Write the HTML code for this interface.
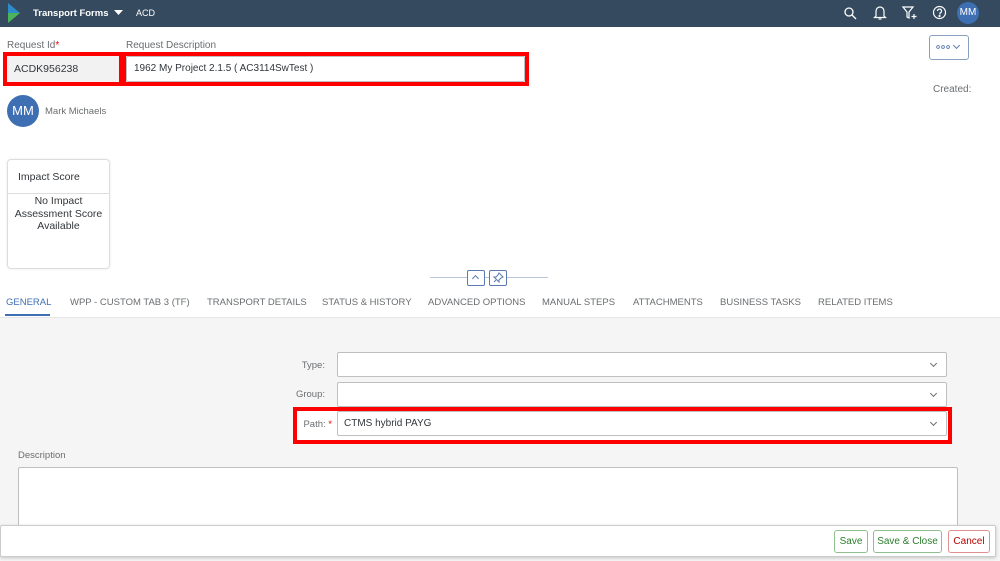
<!DOCTYPE html>
<html><head><meta charset="utf-8"><style>
*{box-sizing:border-box;margin:0;padding:0}
body{width:1000px;height:561px;overflow:hidden;font-family:"Liberation Sans",sans-serif;background:#fff;position:relative;color:#32363a}
.a{position:absolute}
.hdr{left:0;top:0;width:1000px;height:27px;background:#354a5f}
.red{border:4px solid #f00}
.inp{background:#fff;border:1px solid #bfbfbf;border-radius:2px}
.t{font-size:11px;white-space:nowrap}
.tab{top:297px;font-size:9.5px;color:#6a6d70;white-space:nowrap}
.lbl{font-size:9.5px;color:#6a6d70;text-align:right;width:100px}
.chev{position:absolute;right:10px;top:8px;width:5px;height:5px;border-right:1px solid #6a6d70;border-bottom:1px solid #6a6d70;transform:rotate(45deg)}
.btn{top:530px;height:23px;border:1px solid #8fbf8f;border-radius:3px;font-size:10px;color:#2b7d2b;text-align:center;line-height:21px;background:#fff}
</style></head><body>
<div class="a hdr"></div>
<svg class="a" style="left:7px;top:3px" width="14" height="21"><polygon points="1,0 13,10 1,10" fill="#2e8bc9"/><polygon points="1,10 13,10 1,20" fill="#4bb35a"/></svg>
<div class="a t" style="left:33px;top:8px;color:#fff;font-weight:bold;font-size:9.5px">Transport Forms</div>
<svg class="a" style="left:114px;top:10px" width="9" height="6"><polygon points="0,0 9,0 4.5,5" fill="#fff"/></svg>
<div class="a t" style="left:136px;top:8px;color:#fff;font-size:9px">ACD</div>
<svg class="a" style="left:843px;top:6px" width="14" height="14" fill="none" stroke="#fff" stroke-width="1.3"><circle cx="6" cy="6" r="4"/><line x1="9" y1="9" x2="13" y2="13"/></svg>
<svg class="a" style="left:873px;top:5px" width="14" height="16" fill="none" stroke="#fff" stroke-width="1.2"><path d="M3 11V6a4 4 0 0 1 8 0v5l1.5 1.5h-11z"/><path d="M5.5 14h3"/></svg>
<svg class="a" style="left:902px;top:6px" width="16" height="15" fill="none" stroke="#fff" stroke-width="1.2"><path d="M1 1h10l-4 5v6l-2-1V6z"/><path d="M12 8v5M9.5 10.5h5"/></svg>
<svg class="a" style="left:932px;top:5px" width="15" height="15" fill="none" stroke="#fff" stroke-width="1.2"><circle cx="7.5" cy="7.5" r="6"/><path d="M5.5 6a2 2 0 1 1 2.5 2v1.5"/><circle cx="7.5" cy="11" r=".5" fill="#fff"/></svg>
<div class="a" style="left:957px;top:2px;width:22px;height:22px;border-radius:50%;background:#3f6fb3;color:#fff;font-size:10px;text-align:center;line-height:22px">MM</div>

<div class="a t" style="left:7px;top:40px;font-size:10px;color:#6a6d70">Request Id<span style="color:#e00">*</span></div>
<div class="a t" style="left:126px;top:40px;font-size:10px;color:#6a6d70">Request Description</div>
<div class="a red" style="left:3px;top:52px;width:120px;height:34px;background:#f2f2f2"></div>
<div class="a t" style="left:14px;top:63px;font-size:10.5px">ACDK956238</div>
<div class="a red" style="left:122px;top:52px;width:407px;height:34px"></div>
<div class="a inp" style="left:126px;top:56px;width:399px;height:26px"></div>
<div class="a t" style="left:134px;top:63px;font-size:10px">1962 My Project 2.1.5 ( AC3114SwTest )</div>
<div class="a" style="left:7px;top:95px;width:32px;height:32px;border-radius:50%;background:#3f6fb3;color:#fff;font-size:13px;text-align:center;line-height:32px">MM</div>
<div class="a t" style="left:45px;top:106px;font-size:9.5px;color:#6a6d70">Mark Michaels</div>
<div class="a" style="left:929px;top:35px;width:40px;height:25px;border:1px solid #8aa0c0;border-radius:3px"></div>
<svg class="a" style="left:936px;top:45px" width="14" height="4" fill="none" stroke="#5a7ab0" stroke-width="0.9"><circle cx="2" cy="2" r="1.4"/><circle cx="7" cy="2" r="1.4"/><circle cx="12" cy="2" r="1.4"/></svg>
<div class="a" style="left:954px;top:43px;width:5px;height:5px;border-right:1px solid #5a7ab0;border-bottom:1px solid #5a7ab0;transform:rotate(45deg)"></div>
<div class="a t" style="left:933px;top:84px;font-size:10px;color:#6a6d70">Created:</div>

<div class="a" style="left:7px;top:159px;width:103px;height:110px;border:1px solid #ddd;border-radius:4px;box-shadow:0 0 2px rgba(0,0,0,.1)"></div>
<div class="a t" style="left:18px;top:171px;font-size:10.5px">Impact Score</div>
<div class="a" style="left:7px;top:193px;width:103px;height:1px;background:#ddd"></div>
<div class="a" style="left:7px;top:195px;width:103px;text-align:center;font-size:10.5px;line-height:12.5px">No Impact<br>Assessment Score<br>Available</div>

<div class="a" style="left:430px;top:277px;width:118px;height:1px;background:#b8c6d8"></div>
<div class="a" style="left:467px;top:270px;width:18px;height:16px;border:1px solid #5a7ab0;border-radius:2px;background:#fff"></div>
<div class="a" style="left:473px;top:276px;width:5px;height:5px;border-left:1px solid #5a7ab0;border-top:1px solid #5a7ab0;transform:rotate(45deg)"></div>
<div class="a" style="left:489px;top:270px;width:18px;height:16px;border:1px solid #5a7ab0;border-radius:2px;background:#fff"></div>
<svg class="a" style="left:493px;top:272px" width="11" height="11" fill="none" stroke="#5a7ab0"><path d="M6 1l4 4-2 1-2 2v2L1 5h2l2-2z M3 8l-2 2"/></svg>

<div class="a tab" style="left:6px;color:#3f6fb3">GENERAL</div>
<div class="a" style="left:5px;top:314px;width:45px;height:2px;background:#3f6fb3"></div>
<div class="a tab" style="left:70px">WPP - CUSTOM TAB 3 (TF)</div>
<div class="a tab" style="left:207px">TRANSPORT DETAILS</div>
<div class="a tab" style="left:322px">STATUS &amp; HISTORY</div>
<div class="a tab" style="left:428px">ADVANCED OPTIONS</div>
<div class="a tab" style="left:542px">MANUAL STEPS</div>
<div class="a tab" style="left:633px">ATTACHMENTS</div>
<div class="a tab" style="left:720px">BUSINESS TASKS</div>
<div class="a tab" style="left:818px">RELATED ITEMS</div>

<div class="a" style="left:0;top:317px;width:1000px;height:244px;background:#f5f5f5;border-top:1px solid #e5e5e5"></div>
<div class="a lbl" style="left:225px;top:360px">Type:</div>
<div class="a inp" style="left:337px;top:352px;width:610px;height:25px"><div class="chev"></div></div>
<div class="a lbl" style="left:225px;top:389px">Group:</div>
<div class="a inp" style="left:337px;top:382px;width:610px;height:25px"><div class="chev"></div></div>
<div class="a red" style="left:293px;top:407px;width:659px;height:37px;background:#fff"></div>
<div class="a lbl" style="left:232px;top:419px">Path:<span style="color:#e00"> *</span></div>
<div class="a inp" style="left:337px;top:411px;width:610px;height:25px"><div class="chev"></div></div>
<div class="a t" style="left:344px;top:418px;font-size:10px">CTMS hybrid PAYG</div>
<div class="a t" style="left:18px;top:450px;font-size:9.5px;color:#6a6d70">Description</div>
<div class="a inp" style="left:18px;top:467px;width:940px;height:70px"></div>

<div class="a" style="left:0;top:525px;width:996px;height:32px;background:#fff;border:1px solid #ccc;border-radius:2px;box-shadow:0 1px 3px rgba(0,0,0,.2)"></div>
<div class="a btn" style="left:834px;width:34px">Save</div>
<div class="a btn" style="left:873px;width:69px">Save &amp; Close</div>
<div class="a btn" style="left:948px;width:42px;border-color:#e09090;color:#bb0000">Cancel</div>
</body></html>
